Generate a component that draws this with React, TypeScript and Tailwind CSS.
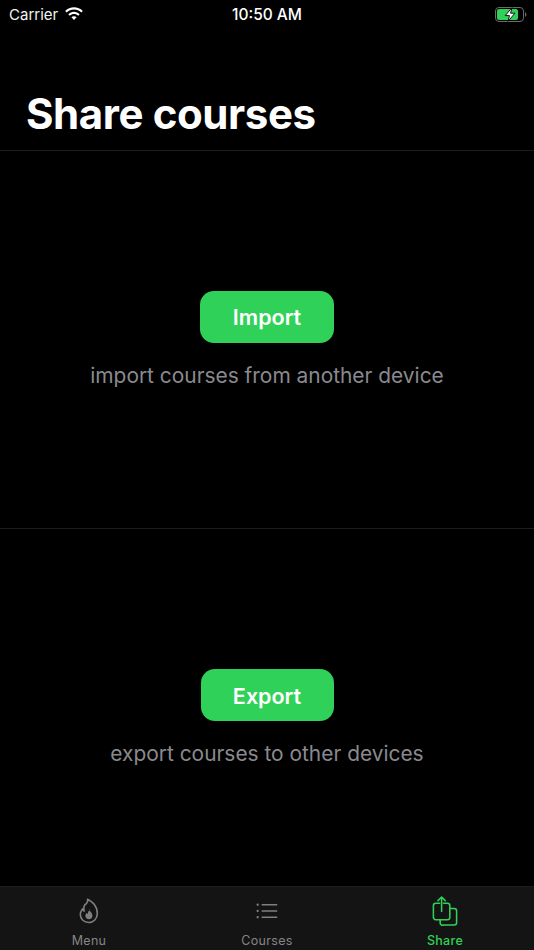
import type { ReactNode } from "react";

const WifiIcon = () => (
  <svg width="20" height="16" viewBox="0 0 20 15" fill="#fff">
    <path d="M10 2.900c2.800 0 5.400 1.100 7.400 3l1.400-1.500C16.400 2.100 13.300.8 10 .8S3.600 2.100 1.200 4.400l1.400 1.500c2-1.900 4.600-3 7.400-3z" />
    <path d="M10 7.500c1.600 0 3.100.6 4.200 1.700l1.500-1.500C14.100 6.200 12.100 5.300 10 5.300s-4.100.9-5.700 2.400l1.500 1.500C6.900 8.100 8.400 7.500 10 7.500z" />
    <path d="M10 9.800c-1 0-1.900.4-2.600 1L10 13.500l2.600-2.700c-.7-.6-1.600-1-2.600-1z" />
  </svg>
);

const BatteryIcon = () => (
  <svg width="32" height="15" viewBox="0 0 32 15" fill="none">
    <rect x="0.5" y="0.5" width="28" height="14" rx="3.5" stroke="#6b6b6b" />
    <rect x="2" y="2" width="21" height="11" rx="2" fill="#30d158" />
    <path d="M30 5.200c.9.300 1.400 1.100 1.400 2.300s-.5 2-1.400 2.300z" fill="#6b6b6b" />
    <path d="M17 0.600 10.200 8.600h4.300l-1.500 5.800 6.900-8.200h-4.300z" fill="#fff" stroke="#000" strokeWidth="0.9" />
  </svg>
);

const FlameIcon = () => (
  <svg width="20" height="26" viewBox="0 0 20 26" fill="none" stroke="#7f7f7f" strokeWidth="1.6" strokeLinejoin="round">
    <path d="M8.500 1.200c3 1.300 9.800 5.500 9.800 14.300 0 5.200-3.800 9-8.500 9s-8.500-3.400-8.500-7.900c0-2.300 1-4.100 2.100-5.700.3 1 .8 1.700 1.700 2.200C4.300 9 5.300 6.500 7.500 5.500c1.100-.9 1.400-2.500 1-4.300z" />
    <path d="M10.100 11.500c.4 1.800 3.300 3 3.300 6.200 0 2.100-1.500 3.500-3.500 3.500s-3.500-1.400-3.500-3.300c0-1.200.5-2.200 1.300-2.900.2.500.5.800 1 1 .2-1.800.9-3.300 2.400-4.500z" fill="#7f7f7f" stroke="none" />
  </svg>
);

const ListIcon = () => (
  <svg width="22" height="16" viewBox="0 0 24 18" fill="none" stroke="#7f7f7f" strokeWidth="1.5">
    <circle cx="1.500" cy="2" r="1.300" fill="#7f7f7f" stroke="none" />
    <circle cx="1.500" cy="9" r="1.300" fill="#7f7f7f" stroke="none" />
    <circle cx="1.500" cy="16" r="1.300" fill="#7f7f7f" stroke="none" />
    <path d="M6 2h17.500M6 9h17.500M6 16h17.500" />
  </svg>
);

const ShareIcon = () => (
  <svg width="26" height="30" viewBox="0 0 26 31" fill="none" stroke="#30d158" strokeWidth="1.6" strokeLinecap="round" strokeLinejoin="round">
    <path d="M7.500 7.500H3.500a2.500 2.500 0 0 0-2.500 2.500v12a2.500 2.500 0 0 0 2.500 2.500h12a2.500 2.500 0 0 0 2.500-2.500V10a2.500 2.500 0 0 0-2.500-2.500h-4" />
    <path d="M9.500 16V1.200M5.800 4.800l3.700-3.700 3.700 3.700" />
    <path d="M18.500 13h4a2.500 2.500 0 0 1 2.500 2.500v12a2.500 2.500 0 0 1-2.500 2.500h-11A2.500 2.500 0 0 1 8 27.500v-3" />
  </svg>
);

const ShareSection = ({ label, hint, className, buttonClass }: { label: string; hint: string; className: string; buttonClass: string }) => (
  <section className={`flex flex-col items-center ${className}`}>
    <button className={`flex items-center justify-center rounded-[14px] bg-[#30d158] pt-px text-[21.5px] font-semibold text-white ${buttonClass}`}>
      {label}
    </button>
    <p className="mt-[18px] text-[20.9px] leading-[30px] text-[#8a8a8e]">{hint}</p>
  </section>
);

const TabItem = ({ label, active, icon }: { label: string; active?: boolean; icon: ReactNode }) => (
  <div className="flex flex-col items-center">
    <div className="flex h-[47px] items-center justify-center">{icon}</div>
    <span className={`text-[12.5px] leading-[14px] tracking-[0.3px] ${active ? "font-medium text-[#30d158]" : "font-normal text-[#858585]"}`}>
      {label}
    </span>
  </div>
);

export default function App() {
  return (
    <div className="flex h-[950px] w-[534px] flex-col overflow-hidden bg-black font-['Inter',sans-serif] text-white">
      <div className="relative flex h-[28px] items-center justify-between pt-px pl-[9px] pr-[7px]">
        <div className="flex items-center gap-[6px]">
          <span className="text-[15px] leading-none text-[#f2f2f2]">Carrier</span>
          <WifiIcon />
        </div>
        <span className="absolute left-0 right-0 text-center text-[15.5px] leading-none font-medium">10:50 AM</span>
        <BatteryIcon />
      </div>

      <header className="flex h-[123px] items-end border-b border-[#1c1c1c] pb-[11px] pl-[26px]">
        <h1 className="text-[42px] leading-[50px] font-bold tracking-[-0.4px]">Share courses</h1>
      </header>

      <ShareSection label="Import" hint="import courses from another device" buttonClass="h-[52px] w-[134px]" className="h-[379px] border-b border-[#1c1c1c] pt-[140px]" />
      <ShareSection label="Export" hint="export courses to other devices" buttonClass="h-[52px] w-[133px]" className="h-[357px] pt-[140px]" />

      <nav className="grid h-[64px] grid-cols-[178px_178px_178px] border-t border-[#1e1e1e] bg-[#141414]">
        <TabItem label="Menu" icon={<FlameIcon />} />
        <TabItem label="Courses" icon={<ListIcon />} />
        <TabItem label="Share" active icon={<ShareIcon />} />
      </nav>
    </div>
  );
}
